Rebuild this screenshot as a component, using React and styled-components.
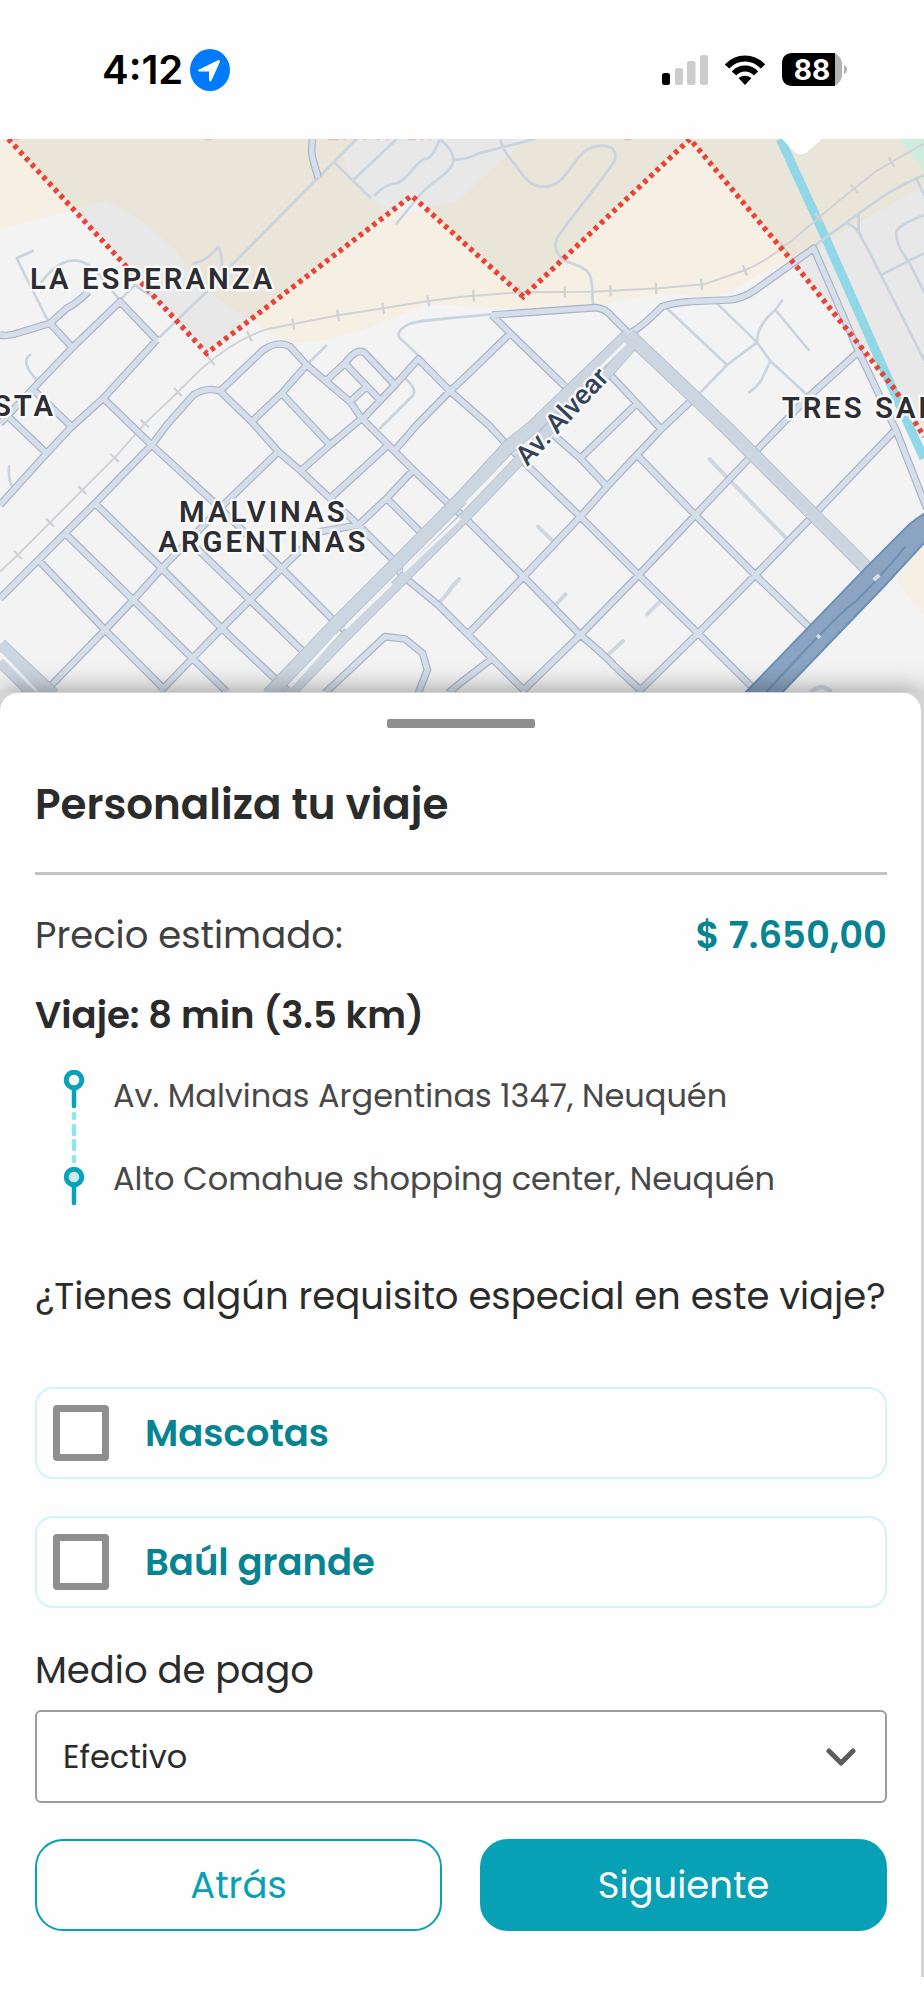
import React from "react";
import styled, { createGlobalStyle } from "styled-components";

const GlobalStyle = createGlobalStyle`
  * { box-sizing: border-box; }
  body {
    margin: 0;
    background: #fefefe;
    color: #2b2b2b;
    font-family: Poppins, Inter, "Open Sans", sans-serif;
  }
  button, input, select { font: inherit; color: inherit; }
`;

const Page = styled.div`
  display: flex;
  flex-direction: column;
  min-height: 100vh;
  overflow: hidden;
`;

const StatusBar = styled.header`
  display: flex;
  align-items: center;
  justify-content: space-between;
  height: 139px;
  padding: 0 76px 0 102px;
  color: #000;
`;

const StatusGroup = styled.div`
  display: flex;
  align-items: center;
  gap: ${(p) => p.$gap}px;
`;

const Clock = styled.time`
  font: 600 40px/48px Inter, sans-serif;
`;

const MapView = styled.svg`
  display: block;
  width: 100%;
  height: auto;
`;

const SheetFrame = styled.div`
  position: relative;
  padding: 1px 3px 0 0;
  background: #d4d4d4;
  box-shadow: 0 0 26px rgba(0, 0, 0, 0.42);
  clip-path: inset(-40px 0 0 0);
`;

const Sheet = styled.main`
  display: flex;
  flex-direction: column;
  padding: 26px 34px 46px 35px;
  border-radius: 18px 18px 0 0;
  background: #fefefe;
`;

const Handle = styled.div`
  align-self: center;
  width: 148px;
  height: 9px;
  border-radius: 2px;
  background: #8f8f8f;
`;

const Title = styled.h1`
  margin: 53px 0 43px;
  font-size: 42px;
  font-weight: 600;
  line-height: 48px;
`;

const Divider = styled.hr`
  width: 100%;
  height: 3px;
  margin: 0 0 36px;
  border: 0;
  background: #c2c2c2;
`;

const PriceRow = styled.div`
  display: flex;
  justify-content: space-between;
  font-size: 37px;
  line-height: 48px;
  color: #3f3f3f;
`;

const Price = styled.strong`
  font-weight: 600;
  color: #078492;
`;

const TripSummary = styled.h2`
  margin: 32px 0 31px;
  font-size: 37px;
  font-weight: 600;
  line-height: 48px;
`;

const Route = styled.div`
  display: flex;
  gap: 28px;
  padding-left: 28px;
`;

const Stops = styled.ol`
  display: flex;
  flex-direction: column;
  gap: 43px;
  margin: 0;
  padding: 6px 0 0;
  list-style: none;
  font-size: 32px;
  line-height: 40px;
  color: #484848;
`;

const Options = styled.fieldset`
  display: flex;
  flex-direction: column;
  gap: 37px;
  min-width: 0;
  margin: 66px 0 38px;
  padding: 0;
  border: 0;
`;

const Question = styled.legend`
  margin-bottom: 67px;
  padding: 0;
  font-size: 37px;
  line-height: 48px;
  white-space: nowrap;
`;

const Option = styled.label`
  display: flex;
  align-items: center;
  gap: 36px;
  height: 92px;
  padding: 0 16px;
  border: 2px solid #d0f4f9;
  border-radius: 18px;
  font-size: 37px;
  font-weight: 600;
  color: #078492;
`;

const Checkbox = styled.input`
  appearance: none;
  width: 56px;
  height: 56px;
  margin: 0;
  border: 7px solid #8f8f8f;
  border-radius: 4px;
  background: #fff;

  &:checked {
    background: #08a0b5;
  }
`;

const FieldLabel = styled.label`
  margin-bottom: 16px;
  font-size: 37px;
  line-height: 48px;
`;

const SelectField = styled.div`
  display: grid;
  align-items: center;
  margin-bottom: 36px;

  & > * {
    grid-area: 1 / 1;
  }

  & > svg {
    justify-self: end;
    margin-right: 31px;
    pointer-events: none;
  }
`;

const Select = styled.select`
  appearance: none;
  width: 100%;
  height: 93px;
  padding: 0 26px;
  border: 2px solid #9d9d9d;
  border-radius: 6px;
  background: #fefefe;
  font-size: 32px;
`;

const Actions = styled.div`
  display: grid;
  grid-template-columns: 1fr 1fr;
  gap: 38px;
`;

const ActionButton = styled.button`
  height: 92px;
  border: 2px solid #08a0b5;
  border-radius: 28px;
  background: ${(p) => (p.$primary ? "#08a0b5" : "#fefefe")};
  color: ${(p) => (p.$primary ? "#fff" : "#08a0b5")};
  font-size: 37px;
`;

function LocationIcon() {
  return (
    <svg width="40" height="42" viewBox="0 0 40 42" aria-hidden="true">
      <ellipse cx="20" cy="21" rx="20" ry="21" fill="#007aff" />
      <path d="M9 20.500 28 11.200Q30.500 10.500 29.800 13L21.500 31.500Q20 33.500 19 31V22.500H10Q6.500 22 9 20.500Z" fill="#fff" />
    </svg>
  );
}

function SignalIcon() {
  return (
    <svg width="46" height="30" viewBox="0 0 46 30" aria-hidden="true">
      <rect y="18" width="8" height="12" rx="2.500" fill="#000" />
      <rect x="13" y="13" width="8" height="17" rx="2.500" fill="#ccc" />
      <rect x="25" y="6" width="8.500" height="24" rx="2.500" fill="#ccc" />
      <rect x="38" width="8" height="30" rx="2.500" fill="#ccc" />
    </svg>
  );
}

function WifiIcon() {
  return (
    <svg width="40" height="30" viewBox="0 0 40 30" aria-hidden="true">
      <g fill="none" stroke="#000" strokeWidth="6">
        <path d="M2 11.500Q9.500 3.500 20 3.500T38 11.500" />
        <path d="M9 18.500Q13.500 13.500 20 13.500T31 18.500" />
      </g>
      <path d="M13.500 23Q20 18.500 26.500 23L20 30Z" fill="#000" />
    </svg>
  );
}

function BatteryIcon() {
  return (
    <svg width="66" height="34" viewBox="0 0 66 34" role="img" aria-label="88%">
      <rect width="60" height="33" rx="11" fill="#b3b3b3" />
      <path d="M11 0H53V33H11Q0 33 0 22V11Q0 0 11 0Z" fill="#000" />
      <path d="M62 12Q65 13 65 16.500T62 21Z" fill="#b3b3b3" />
      <text x="30" y="26.500" textAnchor="middle" fontFamily="Inter, sans-serif" fontSize="28" fontWeight="700" fill="#fff">88</text>
    </svg>
  );
}

function RouteIcon() {
  return (
    <svg width="22" height="136" viewBox="0 0 22 136" aria-hidden="true">
      <g fill="none" stroke="#08a3b8" strokeWidth="4.500" strokeLinecap="round">
        <circle cx="11" cy="10" r="7.800" strokeWidth="5" fill="#fff" />
        <path d="M11 19V36" />
        <circle cx="11" cy="107" r="7.800" strokeWidth="5" fill="#cdebef" />
        <path d="M11 116V133" />
      </g>
      <path d="M11 44V48M11 56V64M11 71V79M11 87V91" stroke="#92e4ec" strokeWidth="4.500" strokeLinecap="round" />
    </svg>
  );
}

function ChevronIcon() {
  return (
    <svg width="30" height="18" viewBox="0 0 30 18" aria-hidden="true">
      <path d="M3 3 15 15 27 3" fill="none" stroke="#5c5c5c" strokeWidth="5" strokeLinecap="round" strokeLinejoin="round" />
    </svg>
  );
}

const RED_ZONE = "M25 12 620 655 1235 182 1570 485 2070 12 2386 390 2686 765 2772 905";

const RAILWAY =
  "M0 1310 53 1260 150 1163 247 1065 345 967 435 865 535 770 600 705Q700 615 800 583L880 567 1015 541 1150 520 1290 497 1386 485 1560 472 1776 470 1976 460 2111 448 2236 405Q2310 375 2416 283L2516 198 2626 110 2772 25";

const LANES = [
  "M50 370 98 348M50 370 145 560M125 440Q210 330 290 410L355 490",
  "M580 385Q620 380 655 335Q668 360 665 395M690 395 1070 12M480 605 620 470M365 490 405 450Q440 480 470 485",
  "M1003 82 1110 187M1060 135 1190 12M1125 180Q1160 145 1190 145C1230 130 1250 75 1275 72C1300 70 1310 30 1320 12",
  "M1320 12Q1365 50 1360 80C1350 120 1290 140 1260 180L1190 265M1360 75 1386 72Q1406 70 1436 55L1606 12",
  "M1471 538C1350 550 1250 555 1225 568Q1185 590 1200 610L1260 665M930 680 978 633M1215 730Q1250 760 1240 780L1140 880M110 735Q60 680 90 660",
  "M1501 12Q1506 45 1546 90C1586 150 1606 155 1631 155C1716 155 1716 30 1806 32Q1856 35 1844 75C1836 100 1686 280 1671 310Q1656 345 1691 375C1746 400 1771 395 1776 450L1779 512",
  "M2772 120C2636 180 2616 210 2446 330M2576 240V290Q2580 305 2600 335L2772 675M2541 265Q2576 280 2586 310M2772 240Q2696 270 2689 290Q2686 330 2726 380L2772 470M2646 418 2772 355M2751 135 2772 180",
  "M1996 515 2181 690 2096 778M2151 505 2271 622 2311 678 2416 775M2181 690 2271 622Q2271 570 2326 525L2346 497M2326 525 2426 645M2311 678C2286 730 2286 745 2248 772",
  "M27 995Q25 1040 38 1055",
].join("");

const STUBS =
  "M2128 972 2361 1212M1614 1175 1658 1218M1696 1378 1666 1410M1941 1438 1983 1397M1826 1558 1869 1518M1378 1332Q1350 1360 1345 1372L1315 1405M2436 1668Q2463 1645 2491 1668";

const STREETS = [
  "M938 12Q932 50 938 70L955 130",
  "M0 600Q30 605 60 592L150 565 200 520Q230 505 265 470M150 565 215 635",
  "M470 615 360 500 215 640 100 760 0 865M470 615 310 790 210 880 140 955 0 1110M95 760 215 875M0 820 30 850 140 955",
  "M310 790 455 930 640 1100 845 1300 1005 1460 1045 1495",
  "M0 1390 115 1275 195 1195 285 1105 455 930 500 870 580 780Q620 755 660 768L790 645Q835 615 870 635L920 690 1050 800 1085 850 1165 930 1240 1005 1355 1115 1386 1140",
  "M660 768 755 860 835 950 905 1010 990 1090 1075 1170 1185 1280 1205 1320 1315 1410 1571 1665",
  "M920 690 845 775 755 860M845 775 990 930M1085 850 990 930 905 1005",
  "M980 735 1035 685Q1075 630 1100 660L1185 750M1035 685 1140 795M1050 800 1100 755",
  "M1085 855 1185 750 1255 672 1350 768 1466 870 1526 935 1596 1005 1741 1145 1916 1320 2094 1495 2260 1660",
  "M1476 540 1531 595 1386 735 1350 768 1250 870 1185 945M1165 930 990 1090M1531 595 1696 755",
  "M1240 1005 1160 1090 1075 1170 960 1190 845 1300 750 1395 665 1480 577 1570 490 1660 480 1670M1160 1090 1265 1195",
  "M835 950 680 1100 485 1300 400 1395 315 1485 150 1655",
  "M285 1105 485 1300 665 1480 840 1645 865 1670M195 1195 400 1395 577 1570 680 1670M115 1275 315 1485 490 1660M590 1240 750 1395 915 1555",
  "M975 1674 1155 1505 1215 1512 1268 1555 1282 1605 1255 1674M1345 1674 1386 1640 1471 1575",
  "M1476 540 1786 518Q1816 520 1836 545L1886 595Q1916 585 1986 515C2026 500 2086 498 2186 495Q2226 492 2266 465L2441 340 2576 650 2690 890 2780 1120",
  "M2576 650 2426 785 2266 950 2086 1140 1916 1320 1741 1500 1571 1665",
  "M1831 720 1911 805 1981 880M1661 900 1741 970 1821 1055M1911 805 1741 970",
  "M2076 795 1981 885 1821 1055 1741 1145 1571 1325 1406 1495M1916 965 2086 1140 2266 1320 2431 1480",
  "M2686 885 2441 1140 2266 1320 2094 1495 1916 1670M1401 1155 1571 1325 1741 1500Q1825 1570 1840 1590L1926 1670",
].join("");

function CityMap() {
  return (
    <MapView viewBox="0 12 2772 1659" role="img" aria-label="Mapa">
      <rect y="12" width="2772" height="1660" fill="#f4f3f4" />
      <path
        d="M0 12H2772V150L2446 340 2266 425Q2180 480 2126 485L1986 475 1786 510 1566 522 1386 513 1280 510 1100 580 980 615 870 625 810 590 740 545 625 470 555 400Q545 360 520 340L420 255 320 195 200 230 0 283Z"
        fill="#f5f0e3"
      />
      <path d="M1060 12Q1025 50 1045 110L1150 225 1250 230 1370 200 1486 95 1546 40 1580 12Z" fill="#f4f3f4" />
      <path d="M2696 12H2772V110Z" fill="#d8f8e8" />
      <path d="M2686 1335 2772 1220V1440Z" fill="#f5f0e3" />
      <path d="M25 12 620 655 1235 182 1570 485 2070 12ZM2070 12 2386 390 2686 765 2772 905V12Z" fill="#000" fillOpacity=".045" />

      <g fill="none" strokeLinejoin="round">
        <path d="M2341 12 2446 240 2726 870 2772 970" stroke="#90d7e7" strokeWidth="27" />
        <path d={RAILWAY} stroke="#cfd3d6" strokeWidth="6" />
        <path d={RAILWAY} stroke="#cfd3d6" strokeWidth="34" strokeDasharray="7 130" strokeDashoffset="-70" />
        <path d={LANES} stroke="#c8d4e0" strokeWidth="8" strokeLinecap="round" />
        <path d={STUBS} stroke="#cfd8e1" strokeWidth="12" strokeLinecap="round" />
        <path d={STREETS} stroke="#a8b3c5" strokeWidth="23" />
        <path d={STREETS} stroke="#d4dfeb" strokeWidth="16" />

        <g stroke="#b3bfce">
          <path d="M1886 600 1606 870 1526 935 1386 1088 1185 1290 1010 1465 805 1680M1886 600 2166 865 2266 965 2441 1140 2601 1300M0 1530 160 1680" strokeWidth="43" />
          <path d="M1901 625 1831 705 1626 905 1401 1140 1210 1330 1045 1495 865 1680M0 1580 100 1680" strokeWidth="34" />
        </g>
        <g stroke="#ccd6e0">
          <path d="M1886 600 1606 870 1526 935 1386 1088 1185 1290 1010 1465 805 1680M1886 600 2166 865 2266 965 2441 1140 2601 1300M0 1530 160 1680" strokeWidth="38" />
          <path d="M1901 625 1831 705 1626 905 1401 1140 1210 1330 1045 1495 865 1680M0 1580 100 1680" strokeWidth="29" />
        </g>
        <path d="M1876 625 1800 700M1535 965 1400 1105M1380 1150 1210 1310M1175 1345 1035 1480M1010 1500 870 1655M0 1555 110 1668" stroke="#f2f3f5" strokeWidth="9" />
      </g>

      <path d="M2235 1674 2596 1300 2726 1170Q2750 1148 2780 1132V1215L2656 1350 2345 1674Z" fill="#8ba4c1" stroke="#6b8fb8" strokeWidth="6" />
      <path d="M2300 1670Q2520 1430 2566 1400Q2620 1350 2716 1235" fill="none" stroke="#6b8fb8" strokeWidth="6" />
      <path d="M2621 1335 2638 1320M2452 1508 2460 1501" stroke="#d4dfeb" strokeWidth="12" />
      <path d="M2346 12H2466L2420 52Q2401 64 2383 50Z" fill="#fff" />
      <path d="M40 13H58M615 13H635M985 13H1015M1030 13H1038M1060 13H1068M1090 13H1098M1130 13H1138M1158 13H1166M1225 13H1248M1262 13H1270M1285 13H1292M1872 13H1894" stroke="#efb8b0" strokeWidth="5" />
      <path d={RED_ZONE} fill="none" stroke="#ea4335" strokeWidth="16" strokeDasharray="13 12.500" />

      <g
        fontFamily="Roboto, sans-serif"
        fontSize="88"
        fontWeight="600"
        letterSpacing="9"
        fill="#2c2e33"
        stroke="#fafafa"
        strokeWidth="14"
        strokeLinejoin="round"
        paintOrder="stroke"
      >
        <text x="90" y="463">LA ESPERANZA</text>
        <text x="168" y="842" textAnchor="end">VISTA</text>
        <text x="790" y="1161" textAnchor="middle">MALVINAS</text>
        <text x="790" y="1250" textAnchor="middle">ARGENTINAS</text>
        <text x="2345" y="848">TRES SARGENTOS</text>
        <text transform="translate(1582 996) rotate(-47)" fontSize="82" fontWeight="500" letterSpacing="0" fill="#34435a">Av. Alvear</text>
      </g>
    </MapView>
  );
}

export default function App() {
  return (
    <>
      <GlobalStyle />
      <Page>
        <StatusBar>
          <StatusGroup $gap={7}>
            <Clock>4:12</Clock>
            <LocationIcon />
          </StatusGroup>
          <StatusGroup $gap={17}>
            <SignalIcon />
            <WifiIcon />
            <BatteryIcon />
          </StatusGroup>
        </StatusBar>
        <CityMap />
        <SheetFrame>
          <Sheet>
            <Handle />
            <Title>Personaliza tu viaje</Title>
            <Divider />
            <PriceRow>
              <span>Precio estimado:</span>
              <Price>$ 7.650,00</Price>
            </PriceRow>
            <TripSummary>Viaje: 8 min (3.5 km)</TripSummary>
            <Route>
              <RouteIcon />
              <Stops>
                <li>Av. Malvinas Argentinas 1347, Neuquén</li>
                <li>Alto Comahue shopping center, Neuquén</li>
              </Stops>
            </Route>
            <Options>
              <Question>¿Tienes algún requisito especial en este viaje?</Question>
              <Option>
                <Checkbox type="checkbox" />
                Mascotas
              </Option>
              <Option>
                <Checkbox type="checkbox" />
                Baúl grande
              </Option>
            </Options>
            <FieldLabel htmlFor="payment">Medio de pago</FieldLabel>
            <SelectField>
              <Select id="payment" defaultValue="efectivo">
                <option value="efectivo">Efectivo</option>
              </Select>
              <ChevronIcon />
            </SelectField>
            <Actions>
              <ActionButton type="button">Atrás</ActionButton>
              <ActionButton type="button" $primary>Siguiente</ActionButton>
            </Actions>
          </Sheet>
        </SheetFrame>
      </Page>
    </>
  );
}
